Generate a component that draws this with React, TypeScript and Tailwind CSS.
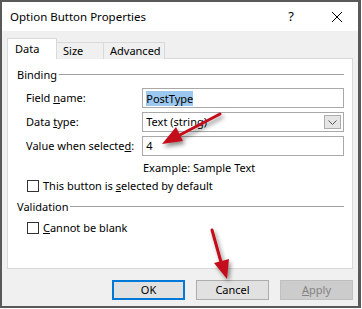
import { ReactNode } from "react";

const font = "font-['Segoe_UI','Noto_Sans',sans-serif]";

function Field({ children }: { children: ReactNode }) {
  return (
    <div className="flex items-center h-[20px] w-[203px] border border-[#a9a9a9] bg-white px-[3px] text-[11px] text-black">
      {children}
    </div>
  );
}

function Check({ children }: { children: ReactNode }) {
  return (
    <div className="flex items-center gap-[4px] pl-[19px] h-[13px]">
      <div className="w-[12px] h-[12px] border border-[#333] bg-white" />
      <span className="text-[11px] text-black leading-none whitespace-nowrap">{children}</span>
    </div>
  );
}

function Group({ label }: { label: string }) {
  return (
    <div className="flex items-center h-[14px] pl-[9px] pr-[8px]">
      <span className="text-[11px] text-black leading-none">{label}</span>
      <div className="flex-1 h-px bg-[#a0a0a0] ml-[2px]" />
    </div>
  );
}

function Btn({ children, kind }: { children: ReactNode; kind?: "default" | "disabled" }) {
  const cls =
    kind === "default"
      ? "border-2 border-[#0078d7] bg-[#e1e1e1] text-black"
      : kind === "disabled"
      ? "border border-[#bfbfbf] bg-[#cccccc] text-[#838383]"
      : "border border-[#adadad] bg-[#e1e1e1] text-black";
  return (
    <div className={`w-[73px] h-[20px] flex items-center justify-center text-[11px] ${cls}`}>
      {children}
    </div>
  );
}

export default function App() {
  return (
    <div className={`w-[362px] h-[309px] bg-white relative ${font}`}>
      <div className="w-[361px] h-[308px] border-2 border-[#595959] border-r-[3px] flex flex-col bg-[#f0f0f0]">
        {/* title bar */}
        <div className="h-[29px] bg-white flex items-center pl-[8px] pr-[15px] shrink-0">
          <span className="text-[11.5px] text-black flex-1 whitespace-nowrap">Option Button Properties</span>
          <span className="text-[13px] text-black mr-[37px]">?</span>
          <svg width="12" height="12" viewBox="0 0 12 12">
            <path d="M1 1 L11 11 M11 1 L1 11" stroke="#000" strokeWidth="1" />
          </svg>
        </div>

        {/* tabs */}
        <div className="flex items-end pl-[5px] pt-[7px] h-[28px] shrink-0 relative z-10">
          <div className="w-[50px] h-[21px] bg-white border border-[#d9d9d9] border-b-0 flex items-center pl-[7px] text-[11px] text-black">
            Data
          </div>
          <div className="w-[47px] h-[17px] bg-[#f0f0f0] border border-[#d9d9d9] border-l-0 border-b-0 flex items-center pl-[6px] text-[11px] text-black">
            Size
          </div>
          <div className="w-[61px] h-[17px] bg-[#f0f0f0] border border-[#d9d9d9] border-l-0 border-b-0 flex items-center pl-[6px] text-[11px] text-black">
            Advanced
          </div>
        </div>

        {/* panel */}
        <div className="mx-[5px] -mt-px h-[211px] bg-white border border-[#d9d9d9] flex flex-col pt-[8px]">
          <Group label="Binding" />
          <div className="flex flex-col gap-[4px] mt-[7px] pl-[18px] pr-[8px]">
            <div className="flex items-center">
              <span className="w-[117px] text-[11px] text-black whitespace-nowrap">
                Field <u>n</u>ame:
              </span>
              <Field>
                <span className="bg-[#9cc7ee] leading-[15px]">PostType</span>
              </Field>
            </div>
            <div className="flex items-center">
              <span className="w-[117px] text-[11px] text-black whitespace-nowrap">
                Data <u>t</u>ype:
              </span>
              <Field>
                <span className="flex-1">Text (string)</span>
                <div className="w-[17px] h-[14px] border border-[#acacac] bg-[#e5e5e5] flex items-center justify-center -mr-[1px]">
                  <svg width="9" height="5" viewBox="0 0 9 5">
                    <path d="M0.5 0.5 L4.5 4.5 L8.5 0.5" stroke="#555" fill="none" strokeWidth="1" />
                  </svg>
                </div>
              </Field>
            </div>
            <div className="flex items-center">
              <span className="w-[117px] text-[11px] text-black whitespace-nowrap">
                Value when selecte<u>d</u>:
              </span>
              <Field>4</Field>
            </div>
          </div>
          <div className="pl-[135px] mt-[4px] text-[11px] text-black leading-[16px]">Example: Sample Text</div>
          <div className="mt-[3px]">
            <Check>
              This button is <u>s</u>elected by default
            </Check>
          </div>
          <div className="mt-[7px]">
            <Group label="Validation" />
          </div>
          <div className="mt-[8px]">
            <Check>
              <u>C</u>annot be blank
            </Check>
          </div>
        </div>

        {/* buttons */}
        <div className="flex justify-end gap-[11px] pr-[5px] mt-[11px]">
          <Btn kind="default">OK</Btn>
          <Btn>Cancel</Btn>
          <Btn kind="disabled">
            <span>
              <u>A</u>pply
            </span>
          </Btn>
        </div>
      </div>

      {/* annotation arrows */}
      <svg className="absolute inset-0 pointer-events-none" width="362" height="309">
        <defs>
          <filter id="sh" x="-50%" y="-50%" width="200%" height="200%">
            <feDropShadow dx="2" dy="3" stdDeviation="2" floodColor="#000" floodOpacity="0.45" />
          </filter>
        </defs>
        <g filter="url(#sh)" fill="#c3111b" stroke="#c3111b">
          <line x1="220" y1="114" x2="176" y2="137" strokeWidth="3" strokeLinecap="round" />
          <polygon points="162,144 183,141 176,127" stroke="none" />
          <line x1="212" y1="230" x2="221" y2="262" strokeWidth="3" strokeLinecap="round" />
          <polygon points="227,279 229,259 214,263" stroke="none" />
        </g>
      </svg>
    </div>
  );
}
